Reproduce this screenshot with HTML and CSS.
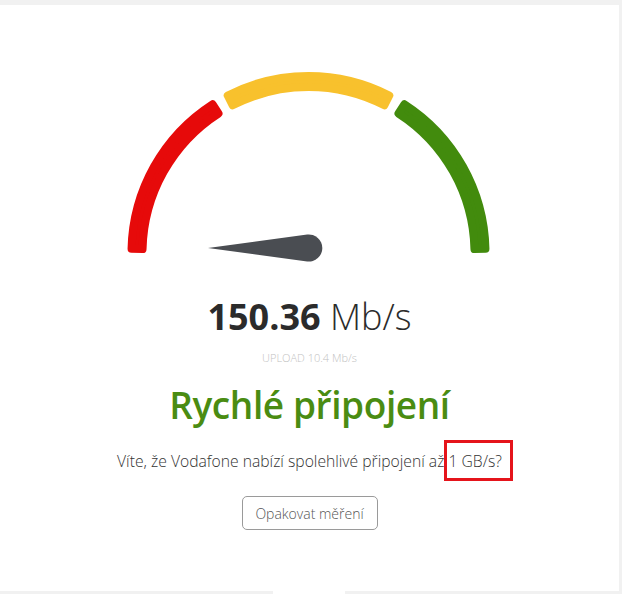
FILE: index.html
```html
<!DOCTYPE html>
<html>
<head>
  <title>Test rychlosti</title>
  <meta charset="UTF-8" />
  <link rel="stylesheet" href="styles.css">
</head>
<body>
  <div class="card">
    <!-- Gauge -->
    <svg class="gauge" width="400" height="210" viewBox="110 60 400 210">
      <path class="seg red" d="M 131.55 248.86 A 177 177 0 0 1 212.51 104.28 L 218.48 113.53 A 166 166 0 0 0 142.54 249.12 Z"/>
      <path class="seg yellow" d="M 227.70 95.52 A 177 177 0 0 1 389.30 95.52 L 384.28 105.31 A 166 166 0 0 0 232.72 105.31 Z"/>
      <path class="seg green" d="M 404.49 104.28 A 177 177 0 0 1 485.45 248.86 L 474.46 249.12 A 166 166 0 0 0 398.52 113.53 Z"/>
      <path class="needle" d="M 208 248 L 307.2 234.6 A 13.5 13.5 0 1 1 307.2 261.4 Z"/>
    </svg>

    <div class="speed"><strong>150.36</strong> Mb/s</div>
    <div class="upload">UPLOAD 10.4 Mb/s</div>

    <h1>Rychlé připojení</h1>
    <p class="tip">Víte, že Vodafone nabízí spolehlivé připojení až <span class="mark">1 GB/s?</span></p>

    <button type="button">Opakovat měření</button>
  </div>
  <div class="tab"></div>
</body>
</html>
```

FILE: styles.css
```css
body {
  margin: 0;
  background: #f1f1f1;
  font-family: "Open Sans", sans-serif;
  overflow: hidden;
}
.card {
  margin-top: 5px;
  width: 619px;
  height: 586px;
  background: #fff;
  padding-top: 55px;
  box-sizing: border-box;
  display: flex;
  flex-direction: column;
  align-items: center;
}
.gauge { display: block; }
.seg { stroke-width: 8; stroke-linejoin: round; }
.red { fill: #e60a0a; stroke: #e60a0a; }
.yellow { fill: #f8c12d; stroke: #f8c12d; }
.green { fill: #428b0d; stroke: #428b0d; }
.needle { fill: #4a4d52; }
.speed {
  margin-top: 27px;
  font-size: 36px;
  line-height: 40px;
  font-weight: 300;
  color: #2b2b2b;
}
.speed strong { font-weight: 700; }
.upload {
  margin-top: 13px;
  font-size: 11px;
  color: #c2c2c2;
  font-weight: 300;
}
h1 {
  margin: 17px 0 0;
  font-size: 37px;
  line-height: 46px;
  font-weight: 600;
  color: #4a8c12;
  letter-spacing: -0.4px;
}
.tip {
  margin: 22px 0 0;
  font-size: 15.7px;
  line-height: 22px;
  font-weight: 300;
  color: #333;
}
/* highlight frame drawn over the text */
.mark { position: relative; }
.mark::after {
  content: "";
  position: absolute;
  left: -4px;
  right: -11px;
  top: -10px;
  bottom: -9px;
  border: 3px solid #e5141b;
}
button {
  margin-top: 24px;
  width: 136px;
  height: 34px;
  background: #fff;
  border: 1px solid #9a9a9a;
  border-radius: 5px;
  font-family: "Open Sans", sans-serif;
  font-size: 14px;
  font-weight: 300;
  color: #555;
}
.tab {
  width: 72px;
  height: 3px;
  margin-left: 273px;
  background: #fff;
}
```
